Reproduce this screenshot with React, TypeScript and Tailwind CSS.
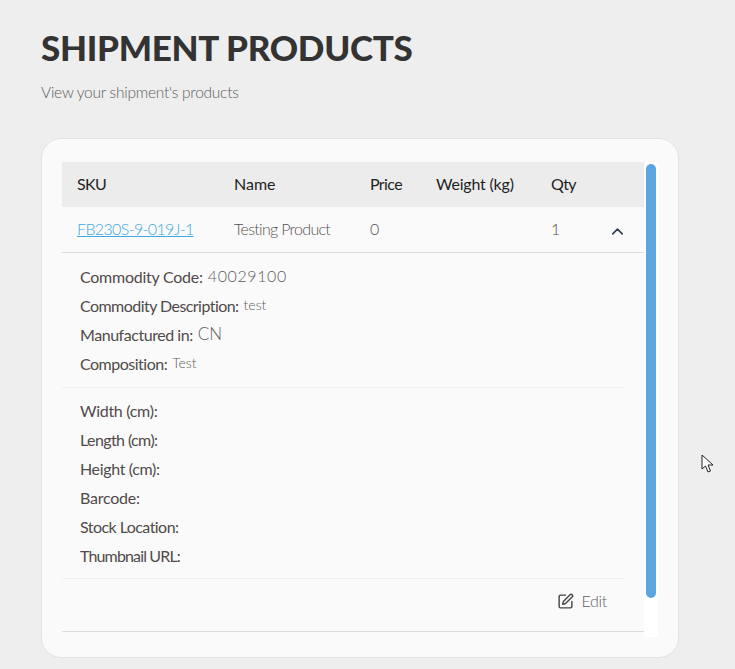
import { ChevronUp, SquarePen } from "lucide-react";

const upper: [string, string, string, string][] = [
  ["Commodity Code:", "40029100", "tracking-[-0.25px]", "text-[16px] tracking-[0.6px]"],
  ["Commodity Description:", "test", "tracking-[-0.55px]", "text-[14px]"],
  ["Manufactured in:", "CN", "tracking-[-0.45px]", "text-[17px]"],
  ["Composition:", "Test", "tracking-[-0.5px]", "text-[14px]"],
];
const lower: [string, string][] = [
  ["Width (cm):", "tracking-[-0.3px]"],
  ["Length (cm):", "tracking-[-0.6px]"],
  ["Height (cm):", "tracking-[-0.35px]"],
  ["Barcode:", "tracking-[-0.25px]"],
  ["Stock Location:", "tracking-[-0.55px]"],
  ["Thumbnail URL:", "tracking-[-0.85px]"],
];

export default function App() {
  return (
    <div className="h-[669px] w-[735px] overflow-hidden bg-[#eeeeee] pl-[41px] pt-[24px] font-['Lato',sans-serif]">
      <h1 className="text-[35px] leading-[46px] font-black tracking-[-0.3px] text-[#333333]">SHIPMENT PRODUCTS</h1>
      <p className="mt-[12px] text-[15.5px] leading-[20px] font-light tracking-[-0.25px] text-[#605c5c]">View your shipment's products</p>
      <div className="mt-[36px] flex h-[520px] w-[638px] items-start rounded-[20px] border border-[#e3e3e3] bg-[#fafafa] pl-[20px] pt-[23px]">
        <div className="w-[582px]">
          <div className="grid h-[45px] grid-cols-[172px_136px_66px_115px_1fr] items-center bg-[#ececec] pb-[2px] text-[16px] text-[#1f1f1f]">
            <span className="pl-[15px] tracking-[-0.6px]">SKU</span>
            <span>Name</span>
            <span className="tracking-[-0.6px]">Price</span>
            <span className="tracking-[-0.2px]">Weight (kg)</span>
            <span className="tracking-[-0.6px]">Qty</span>
          </div>
          <div className="grid h-[46px] grid-cols-[172px_136px_66px_115px_1fr] items-center border-b border-[#dcdcdc] pb-[2px] text-[16px] font-light text-[#555050]">
            <a className="pl-[15px] tracking-[-0.65px] text-[#3fa9e5] underline">FB230S-9-019J-1</a>
            <span className="tracking-[-0.7px]">Testing Product</span>
            <span>0</span>
            <span />
            <span className="flex items-center justify-between pr-[17px]">
              <span>1</span>
              <ChevronUp size={19} strokeWidth={2} className="mt-[5px] text-[#2f3b4a]" />
            </span>
          </div>
          <div className="w-[562px]">
            <div className="border-b border-[#efefef] pl-[18px] pt-[9px] pb-[9px]">
              {upper.map(([k, v, track, size]) => (
                <div key={k} className="flex h-[29px] items-center gap-[5px]">
                  <span className={`text-[16px] font-normal text-[#504a4a] ${track}`}>{k}</span>
                  <span className={`${size} -mt-[2px] font-light text-[#605c5c]`}>{v}</span>
                </div>
              ))}
            </div>
            <div className="border-b border-[#efefef] pl-[18px] pt-[8px] pb-[8px]">
              {lower.map(([k, track]) => (
                <div key={k} className="flex h-[29px] items-center">
                  <span className={`text-[16px] font-normal text-[#504a4a] ${track}`}>{k}</span>
                </div>
              ))}
            </div>
          </div>
          <div className="flex h-[53px] items-center justify-end gap-[7px] border-b border-[#dcdcdc] pr-[37px] pb-[8px] text-[16px] font-light tracking-[-0.3px] text-[#605c5c]">
            <SquarePen size={17} strokeWidth={2} className="text-[#444444]" />
            <span>Edit</span>
          </div>
        </div>
        <div className="h-[475px] w-[14px] rounded-[3px] bg-white pl-[2px] pr-[2px] pt-[2px]">
          <div className="h-[434px] w-[10px] rounded-[5px] bg-[#5ba6e0]" />
        </div>
      </div>
      <svg className="absolute left-[701px] top-[454px]" width="13" height="20" viewBox="0 0 13 20">
        <path d="M1 1 L1 15 L4.5 12 L7 18 L9.5 17 L7 11 L12 11 Z" fill="#ffffff" stroke="#222222" strokeWidth="1" strokeLinejoin="round" />
      </svg>
    </div>
  );
}
